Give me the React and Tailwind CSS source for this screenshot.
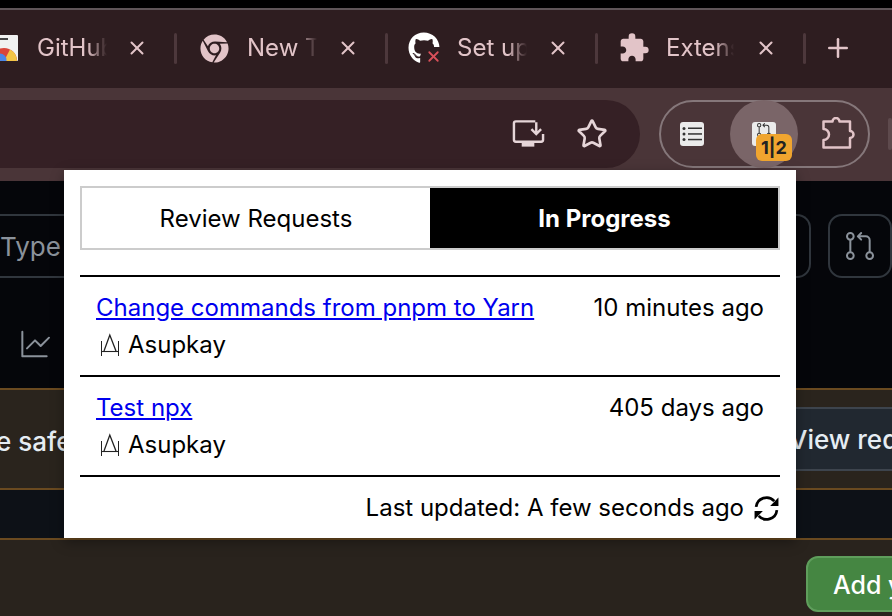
import { Star, X, Plus } from "lucide-react";
import { FaChrome, FaGithub } from "react-icons/fa";
import { GoGraph, GoGitPullRequest } from "react-icons/go";
import { MdExtension } from "react-icons/md";

const TABS = [
  { key: "github", label: "GitHub", width: "w-[177px]", iconPad: "pl-0", iconBox: "w-[18px]", labelWidth: "w-[70px]", gap: "ml-[19px]" },
  { key: "chrome", label: "New Tab", width: "w-[211px]", iconPad: "pl-[23px]", iconBox: "w-[29px]", labelWidth: "w-[70px]", gap: "ml-[18px]" },
  { key: "octo", label: "Set up", width: "w-[210px]", iconPad: "pl-[20px]", iconBox: "w-[32px]", labelWidth: "w-[70px]", gap: "ml-[17px]" },
  { key: "puzzle", label: "Extensions", width: "w-[208px]", iconPad: "pl-[21px]", iconBox: "w-[30px]", labelWidth: "w-[68px]", gap: "ml-[17px]" },
];

const ITEMS = [
  { title: "Change commands from pnpm to Yarn", time: "10 minutes ago", author: "Asupkay" },
  { title: "Test npx", time: "405 days ago", author: "Asupkay" },
];

function TabIcon({ kind }) {
  if (kind === "github") {
    return (
      <svg viewBox="0 0 28 26" className="h-[26px] w-[18px]" preserveAspectRatio="xMaxYMid slice">
        <rect x="0" y="0" width="28" height="26" rx="1" fill="#f1f1f1" />
        <rect x="6" y="3" width="12" height="2" fill="#444" />
        <path d="M1 26a13 13 0 0 1 26 0z" fill="#d9453a" />
        <path d="M14 26 L27 26 A13 13 0 0 0 20 14.5z" fill="#f3c445" />
        <circle cx="10" cy="25" r="6.5" fill="#4a86e8" />
      </svg>
    );
  }
  if (kind === "chrome") {
    return <FaChrome className="h-[29px] w-[29px] text-[#e2c4c8]" />;
  }
  if (kind === "octo") {
    return (
      <span className="relative block h-[32px] w-[32px]">
        <FaGithub className="h-[32px] w-[32px] text-white" />
        <span className="absolute bottom-0 right-0 h-[17px] w-[15px] bg-[#2e1d20]" />
        <X className="absolute bottom-[-1px] right-[-2px] h-[17px] w-[17px] text-[#d9505a]" strokeWidth={2.500} />
      </span>
    );
  }
  return <MdExtension className="h-[32px] w-[32px] shrink-0 text-[#e2c4c8]" />;
}

function Tab({ tab }) {
  return (
    <div className={`flex h-full shrink-0 items-center ${tab.width} ${tab.iconPad}`}>
      <div className={`flex shrink-0 justify-center ${tab.iconBox}`}>
        <TabIcon kind={tab.key} />
      </div>
      <span
        className={`${tab.gap} ${tab.labelWidth} overflow-hidden whitespace-nowrap text-[24px] text-[#e2c4c8] [mask-image:linear-gradient(to_right,black_72%,transparent_100%)]`}
      >
        {tab.label}
      </span>
      <X className="ml-auto mr-[26px] h-[22px] w-[22px] shrink-0 text-[#e2c4c8]" strokeWidth={2.200} />
      <div className="h-[31px] w-[3px] shrink-0 rounded-sm bg-[#4d383c]" />
    </div>
  );
}

function InstallIcon() {
  return (
    <svg viewBox="0 0 34 30" fill="none" className="h-[30px] w-[33px] text-[#e6d5d8]">
      <path d="M24 2H4a2 2 0 0 0-2 2v17a2 2 0 0 0 2 2h26a2 2 0 0 0 2-2v-6" stroke="currentColor" strokeWidth="2.500" />
      <path d="M25 3v11M20 10l5 5 5-5" stroke="currentColor" strokeWidth="2.500" />
      <rect x="10" y="23" width="13" height="5" fill="currentColor" />
    </svg>
  );
}

function ListIcon() {
  return (
    <svg viewBox="0 0 24 24" className="h-[24px] w-[24px] shrink-0">
      <rect width="24" height="24" rx="3" fill="#ebebeb" />
      <g fill="#333">
        <circle cx="4" cy="6.500" r="1.500" />
        <circle cx="4" cy="12" r="1.500" />
        <circle cx="4" cy="17.500" r="1.500" />
        <rect x="8" y="5.500" width="14" height="1.500" />
        <rect x="8" y="11.200" width="14" height="1.500" />
        <rect x="8" y="16.800" width="14" height="1.500" />
      </g>
    </svg>
  );
}

function PuzzleOutline() {
  return (
    <svg viewBox="0 0 34 34" fill="none" className="h-[34px] w-[34px] shrink-0">
      <path
        d="M2.500 4.500H11.500a3.500 3.500 0 0 1 7 0H29V14a3.500 3.500 0 0 1 0 7v9.500H2.500V23a5.500 5.500 0 0 0 0-11z"
        stroke="#e2c4c8"
        strokeWidth="2.500"
        strokeLinejoin="round"
      />
    </svg>
  );
}

function AvatarMark() {
  return (
    <svg viewBox="0 0 20 24" fill="none" className="h-[24px] w-[20px] shrink-0" stroke="#222">
      <path d="M1.500 8v15M18.500 8v15" strokeWidth="1" />
      <path d="M4 18 9.800 2 16 18" strokeWidth="1.300" />
      <path d="M1.500 18.500h17" strokeWidth="1.100" />
    </svg>
  );
}

function RefreshIcon() {
  return (
    <svg viewBox="0 0 26 26" fill="none" className="h-[27px] w-[27px] shrink-0">
      <path d="M3 11.500A10 10 0 0 1 20.500 6" stroke="#000" strokeWidth="2.600" />
      <path d="M23 14.500A10 10 0 0 1 5.500 20" stroke="#000" strokeWidth="2.600" />
      <path d="M24.500 2.500v8h-8zM1.500 23.500v-8h8z" fill="#000" />
    </svg>
  );
}

function Popup() {
  return (
    <div className="absolute left-[64px] top-[170px] flex h-[368px] w-[732px] flex-col bg-white px-[16px] pt-[16px] text-black shadow-[0_4px_12px_rgba(0,0,0,0.35)]">
      <div className="flex h-[64px] border-2 border-[#cccccc] pt-[1px] text-[24px]">
        <div className="flex flex-1 items-center justify-center">Review Requests</div>
        <div className="-mt-[1px] flex w-[348px] items-center justify-center bg-black pt-[1px] pl-[1px] font-bold text-white">In Progress</div>
      </div>
      <div className="mt-[25px] border-t-2 border-black">
        {ITEMS.map((item) => (
          <div key={item.title} className="h-[100px] border-b-2 border-black px-[16px] pt-[13px] text-[24px] leading-[36px]">
            <div className="flex justify-between">
              <a href="#" className="text-[#0000ee] underline">
                {item.title}
              </a>
              <span>{item.time}</span>
            </div>
            <div className="mt-[1px] flex items-center gap-[8px] pl-[4px]">
              <AvatarMark />
              <span>{item.author}</span>
            </div>
          </div>
        ))}
      </div>
      <div className="mt-[13px] flex items-center justify-end gap-[9px] text-[24px] leading-[36px]">
        <span>Last updated: A few seconds ago</span>
        <RefreshIcon />
      </div>
    </div>
  );
}

export default function App() {
  return (
    <div
      className="relative flex h-[616px] w-[892px] flex-col overflow-hidden bg-[#29231d]"
      style={{ fontFamily: "Inter, 'Liberation Sans', sans-serif" }}
    >
      <div className="h-[8px] shrink-0 bg-black" />
      <div className="h-[2px] shrink-0 bg-[#5f5558]" />

      <div className="flex h-[78px] shrink-0 items-center bg-[#2e1d20] pb-[2px]">
        <div className="flex h-full shrink-0 items-center">
          {TABS.map((tab) => (
            <Tab key={tab.key} tab={tab} />
          ))}
        </div>
        <Plus className="ml-[17px] h-[30px] w-[30px] shrink-0 text-[#e2c4c8]" strokeWidth={2} />
      </div>

      <div className="flex h-[93px] shrink-0 items-start bg-[#4a3538] pt-[12px]">
        <div className="flex h-[68px] w-[640px] shrink-0 items-center justify-end gap-[31px] rounded-r-full bg-[#352025] pr-[32px]">
          <InstallIcon />
          <Star className="h-[32px] w-[32px] text-[#e6d5d8]" strokeWidth={2} strokeLinejoin="miter" />
        </div>
        <div className="ml-[19px] flex h-[68px] w-[211px] shrink-0 items-center gap-[26px] rounded-full border-2 border-[#85777a] pl-[19px]">
          <ListIcon />
          <div className="relative flex h-[68px] w-[68px] shrink-0 items-center justify-center rounded-full bg-[#7a6568]">
            <div className="flex h-[24px] w-[24px] justify-center overflow-hidden rounded-[3px] bg-[#ebebeb]">
              <GoGitPullRequest className="h-[16px] w-[16px] text-[#333]" />
            </div>
            <span className="absolute left-[26px] top-[34px] flex h-[27px] w-[36px] items-center justify-center rounded-[6px] bg-[#f0a52f] text-[18px] font-bold text-[#222]">
              1|2
            </span>
          </div>
          <div className="-ml-[3px]">
            <PuzzleOutline />
          </div>
        </div>
        <div className="ml-[18px] mt-[18px] h-[32px] w-[4px] shrink-0 rounded-sm bg-[#5e4a4d]" />
      </div>

      <div className="flex h-[207px] shrink-0 flex-col bg-[#05060a]">
        <div className="mt-[33px] flex items-start gap-[17px]">
          <div className="flex h-[64px] w-[811px] shrink-0 items-center rounded-r-[14px] border-2 border-l-0 border-[#30363d] text-[26px] text-[#8b929b]">
            Type
          </div>
          <div className="flex h-[64px] w-[64px] shrink-0 items-center justify-center rounded-[14px] border-2 border-[#30363d]">
            <GoGitPullRequest className="h-[32px] w-[32px] text-[#8b929b]" />
          </div>
        </div>
        <div className="ml-[20px] mt-[50px]">
          <GoGraph className="h-[32px] w-[32px] text-[#8b929b]" />
        </div>
      </div>

      <div className="flex h-[102px] shrink-0 items-start justify-between border-y-2 border-[#6a4a20] bg-[#2a241d] pt-[17px] text-[26px] font-medium text-[#e6edf3]">
        <span className="-ml-[4px] mt-[15px] whitespace-nowrap">e safe</span>
        <div className="-mr-[60px] flex h-[64px] w-[181px] shrink-0 items-center rounded-l-[12px] border-2 border-[#3d444d] bg-[#212830] pl-[16px] whitespace-nowrap">
          View request
        </div>
      </div>

      <div className="h-[48px] shrink-0 bg-[#0d1117]" />

      <div className="flex flex-1 items-start justify-end border-t-2 border-[#6a4a20] pt-[16px]">
        <div className="-mr-[60px] flex h-[56px] w-[146px] shrink-0 items-center rounded-[12px] border-2 border-[#5f9e5c] bg-[#458642] pl-[25px] pt-[3px] text-[25px] font-medium whitespace-nowrap text-white">
          Add your
        </div>
      </div>

      <Popup />
    </div>
  );
}
